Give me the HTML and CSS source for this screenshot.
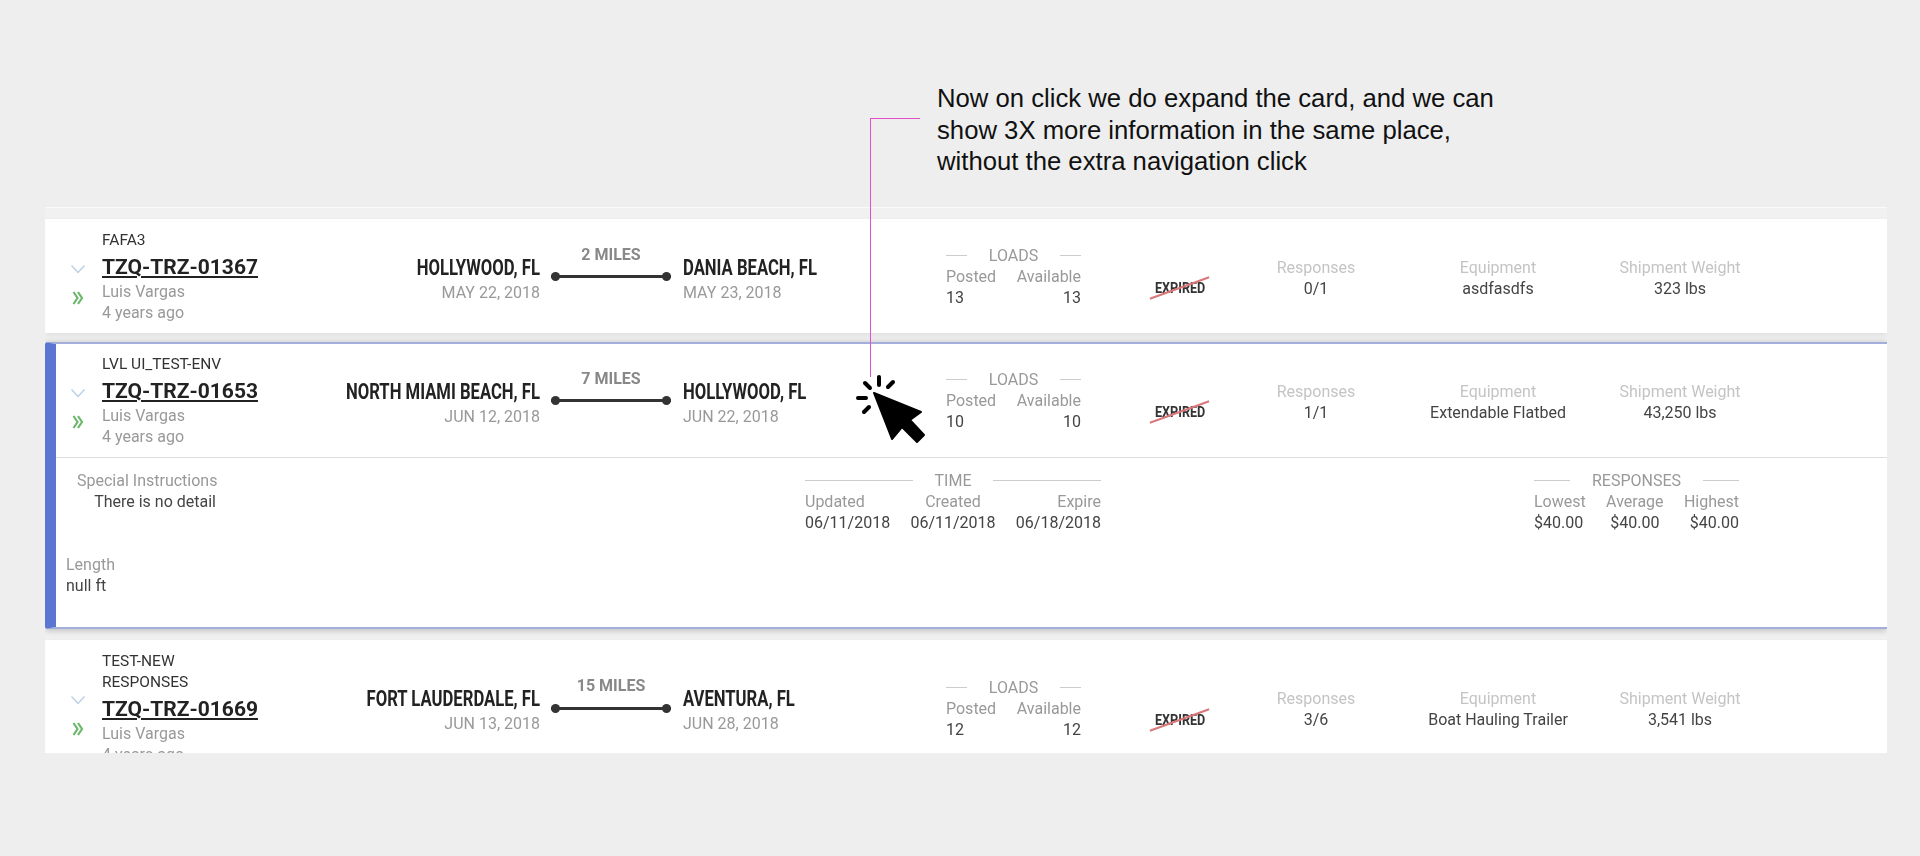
FILE: index.html
```html
<!DOCTYPE html>
<html lang="en">
<head>
    <meta charset="UTF-8">
    <meta name="viewport" content="width=device-width, initial-scale=1.0">
    <title>Shipments</title>
    <link rel="stylesheet" href="styles.css">
</head>
<body>
    <p class="note">Now on click we do expand the card, and we can<br>show 3X more information in the same place,<br>without the extra navigation click</p>

    <div class="leader"></div>

    <svg class="pointer" viewBox="0 0 120 100" width="120" height="100">
        <polygon points="34,33 81,52 70,60 84,75 77,82 62,67 52,79" fill="#000" stroke="#000" stroke-width="2" stroke-linejoin="round"/>
        <g stroke="#000" stroke-width="4" stroke-linecap="round">
            <line x1="39" y1="17" x2="39" y2="25"/>
            <line x1="25" y1="23" x2="30" y2="28"/>
            <line x1="53" y1="22" x2="48" y2="27"/>
            <line x1="18" y1="38" x2="26" y2="38"/>
            <line x1="24" y1="52" x2="29" y2="47"/>
        </g>
    </svg>

    <div class="list">
        <div class="card">
            <div class="row">
                <div class="toggles">
                    <svg class="chevron" viewBox="0 0 16 10" width="16" height="10"><path d="M1.5 1.5 8 8.5l6.500-7" fill="none" stroke="#bcd0e6" stroke-width="1.500"/></svg>
                    <svg class="arrows" viewBox="0 0 12 14" width="12" height="14"><path d="M1.500 1 5.500 7l-4 6M6 1l4 6-4 6" fill="none" stroke="#6cb86c" stroke-width="2.200"/></svg>
                </div>
                <div class="ident">
                    <div class="ref">FAFA3</div>
                    <a class="code">TZQ-TRZ-01367</a>
                    <div class="muted">Luis Vargas</div>
                    <div class="muted">4 years ago</div>
                </div>
                <div class="place origin">
                    <div class="city">HOLLYWOOD, FL</div>
                    <div class="date">MAY 22, 2018</div>
                </div>
                <div class="route">
                    <div class="miles">2 MILES</div>
                    <div class="track"></div>
                </div>
                <div class="place dest">
                    <div class="city">DANIA BEACH, FL</div>
                    <div class="date">MAY 23, 2018</div>
                </div>
                <div class="loads">
                    <div class="heading">LOADS</div>
                    <div class="pair"><span class="label">Posted</span><span class="label">Available</span></div>
                    <div class="pair"><span>13</span><span>13</span></div>
                </div>
                <div class="status"><span class="expired">EXPIRED</span></div>
                <div class="stat"><div class="faint">Responses</div><div>0/1</div></div>
                <div class="stat"><div class="faint">Equipment</div><div>asdfasdfs</div></div>
                <div class="stat"><div class="faint">Shipment Weight</div><div>323 lbs</div></div>
            </div>
        </div>

        <div class="card open">
            <div class="row">
                <div class="toggles">
                    <svg class="chevron" viewBox="0 0 16 10" width="16" height="10"><path d="M1.5 1.5 8 8.5l6.500-7" fill="none" stroke="#bcd0e6" stroke-width="1.500"/></svg>
                    <svg class="arrows" viewBox="0 0 12 14" width="12" height="14"><path d="M1.500 1 5.500 7l-4 6M6 1l4 6-4 6" fill="none" stroke="#6cb86c" stroke-width="2.200"/></svg>
                </div>
                <div class="ident">
                    <div class="ref">LVL UI_TEST-ENV</div>
                    <a class="code">TZQ-TRZ-01653</a>
                    <div class="muted">Luis Vargas</div>
                    <div class="muted">4 years ago</div>
                </div>
                <div class="place origin">
                    <div class="city">NORTH MIAMI BEACH, FL</div>
                    <div class="date">JUN 12, 2018</div>
                </div>
                <div class="route">
                    <div class="miles">7 MILES</div>
                    <div class="track"></div>
                </div>
                <div class="place dest">
                    <div class="city">HOLLYWOOD, FL</div>
                    <div class="date">JUN 22, 2018</div>
                </div>
                <div class="loads">
                    <div class="heading">LOADS</div>
                    <div class="pair"><span class="label">Posted</span><span class="label">Available</span></div>
                    <div class="pair"><span>10</span><span>10</span></div>
                </div>
                <div class="status"><span class="expired">EXPIRED</span></div>
                <div class="stat"><div class="faint">Responses</div><div>1/1</div></div>
                <div class="stat"><div class="faint">Equipment</div><div>Extendable Flatbed</div></div>
                <div class="stat"><div class="faint">Shipment Weight</div><div>43,250 lbs</div></div>
            </div>
            <div class="details">
                <div class="notes">
                    <div class="instructions">
                        <div class="label">Special Instructions</div>
                        <div>There is no detail</div>
                    </div>
                    <div class="length">
                        <div class="label">Length</div>
                        <div>null ft</div>
                    </div>
                </div>
                <div class="time">
                    <div class="heading">TIME</div>
                    <div class="triple">
                        <span class="label">Updated</span><span class="label">Created</span><span class="label">Expire</span>
                        <span>06/11/2018</span><span>06/11/2018</span><span>06/18/2018</span>
                    </div>
                </div>
                <div class="bids">
                    <div class="heading">RESPONSES</div>
                    <div class="triple">
                        <span class="label">Lowest</span><span class="label">Average</span><span class="label">Highest</span>
                        <span>$40.00</span><span>$40.00</span><span>$40.00</span>
                    </div>
                </div>
            </div>
        </div>

        <div class="card">
            <div class="row">
                <div class="toggles">
                    <svg class="chevron" viewBox="0 0 16 10" width="16" height="10"><path d="M1.5 1.5 8 8.5l6.500-7" fill="none" stroke="#bcd0e6" stroke-width="1.500"/></svg>
                    <svg class="arrows" viewBox="0 0 12 14" width="12" height="14"><path d="M1.500 1 5.500 7l-4 6M6 1l4 6-4 6" fill="none" stroke="#6cb86c" stroke-width="2.200"/></svg>
                </div>
                <div class="ident">
                    <div class="ref">TEST-NEW RESPONSES</div>
                    <a class="code">TZQ-TRZ-01669</a>
                    <div class="muted">Luis Vargas</div>
                    <div class="muted">4 years ago</div>
                </div>
                <div class="place origin">
                    <div class="city">FORT LAUDERDALE, FL</div>
                    <div class="date">JUN 13, 2018</div>
                </div>
                <div class="route">
                    <div class="miles">15 MILES</div>
                    <div class="track"></div>
                </div>
                <div class="place dest">
                    <div class="city">AVENTURA, FL</div>
                    <div class="date">JUN 28, 2018</div>
                </div>
                <div class="loads">
                    <div class="heading">LOADS</div>
                    <div class="pair"><span class="label">Posted</span><span class="label">Available</span></div>
                    <div class="pair"><span>12</span><span>12</span></div>
                </div>
                <div class="status"><span class="expired">EXPIRED</span></div>
                <div class="stat"><div class="faint">Responses</div><div>3/6</div></div>
                <div class="stat"><div class="faint">Equipment</div><div>Boat Hauling Trailer</div></div>
                <div class="stat"><div class="faint">Shipment Weight</div><div>3,541 lbs</div></div>
            </div>
        </div>
    </div>
</body>
</html>
```

FILE: styles.css
```css
body {
    margin: 0;
    height: 856px;
    overflow: hidden;
    position: relative;
    background-color: #eeeeee;
    font-family: Roboto, sans-serif;
    font-size: 16px;
    line-height: 21px;
    color: #444;
}

.note {
    margin: 0 0 0 937px;
    padding-top: 83px;
    height: 124px;
    font-family: "Liberation Sans", Arial, sans-serif;
    font-size: 25.700px;
    line-height: 31.500px;
    color: #111;
}

.leader {
    position: absolute;
    left: 870px;
    top: 118px;
    width: 49px;
    height: 258px;
    border-left: 1px solid #e24fc8;
    border-top: 1px solid #e24fc8;
    z-index: 2;
}

.pointer {
    position: absolute;
    left: 840px;
    top: 360px;
    z-index: 2;
}

.list {
    height: 545px;
    margin: 0 33px 0 45px;
    overflow: hidden;
    border-top: 1px solid #fafafa;
    background-color: #f1f1f1;
    filter: blur(0.7px);
}

.card {
    background-color: white;
    margin-top: 11px;
    box-shadow: 0 2px 5px rgba(0,0,0,0.08);
}

.card.open {
    position: relative;
    margin: 9px 0 6px;
    border-top: 2px solid #a3aedb;
    border-bottom: 2px solid #a3aedb;
    border-left: 11px solid #5a75d2;
    border-radius: 3px 0 0 3px;
    box-shadow: 0 1px 7px rgba(0,0,0,0.25);
}

.row {
    display: flex;
    align-items: center;
    padding: 11px 0 10px;
}

.open .row {
    padding-top: 10px;
    border-bottom: 1px solid #ddd;
}

.toggles {
    width: 57px;
    flex: none;
    display: flex;
    flex-direction: column;
    align-items: center;
    padding: 15px 0 0 9px;
    box-sizing: border-box;
    gap: 17px;
}

.open .toggles {
    width: 46px;
    padding: 15px 2px 0 0;
}

.chevron, .arrows {
    display: block;
}

.ident {
    width: 150px;
    flex: none;
}

.ref {
    font-size: 15.500px;
    color: #333;
    width: 120px;
}

.code {
    display: block;
    white-space: nowrap;
    margin: 3px 0 1px;
    font-size: 21px;
    line-height: 26px;
    font-weight: 700;
    color: #222;
    text-decoration: underline;
}

.muted {
    color: #999;
}

.place {
    flex: none;
    white-space: nowrap;
    padding-top: 2px;
}

.origin {
    width: 288px;
    text-align: right;
}

.dest {
    width: 263px;
}

/* no condensed face installed, so the city names get squeezed */
.city {
    font-size: 22.500px;
    line-height: 29px;
    font-weight: 700;
    color: #222;
    transform: scaleX(0.74);
}

.origin .city {
    transform-origin: right center;
}

.dest .city {
    transform-origin: left center;
}

.date {
    color: #999;
}

.route {
    flex: none;
    width: 120px;
    margin: 0 12px 0 11px;
    padding-bottom: 28px;
    text-align: center;
}

.miles {
    margin-bottom: 8px;
    line-height: 20px;
    font-weight: 700;
    color: #888;
}

.track {
    height: 8px;
    display: flex;
    align-items: center;
    justify-content: space-between;
    background: linear-gradient(#333, #333) center / 100% 3px no-repeat;
}

.track::before, .track::after {
    content: "";
    width: 9px;
    height: 9px;
    border-radius: 50%;
    background-color: #333;
}

.loads {
    flex: none;
    width: 135px;
}

.heading {
    display: flex;
    align-items: center;
    gap: 22px;
    color: #999;
}

.heading::before, .heading::after {
    content: "";
    flex: 1;
    height: 1px;
    background-color: #ccc;
}

.pair {
    display: flex;
    justify-content: space-between;
}

.triple {
    display: grid;
    grid-template-columns: auto auto auto;
    justify-content: space-between;
}

.triple span:nth-child(3n+2) {
    text-align: center;
}

.triple span:nth-child(3n) {
    text-align: right;
}

.label {
    color: #999;
}

.status {
    flex: none;
    position: relative;
    width: 144px;
    padding: 24px 0 0 74px;
    box-sizing: border-box;
}

.expired {
    display: block;
    font-size: 15px;
    font-weight: 700;
    white-space: nowrap;
    color: #333;
    transform: scaleX(0.84);
    transform-origin: left center;
}

/* the strike line over the word */
.status::after {
    content: "";
    position: absolute;
    left: 67px;
    top: 33px;
    width: 63px;
    height: 2px;
    background-color: #d9777a;
    transform: rotate(-20deg);
}

.stat {
    flex: none;
    width: 182px;
    text-align: center;
    white-space: nowrap;
    margin-top: 2px;
}

.faint {
    color: #c4c4c4;
}

.details {
    display: flex;
    height: 169px;
    padding-top: 12px;
    box-sizing: border-box;
}

.notes {
    width: 749px;
    flex: none;
}

.instructions {
    width: 139px;
    margin-left: 21px;
    text-align: right;
    white-space: nowrap;
}

.instructions .label {
    text-align: left;
}

.length {
    margin: 42px 0 0 10px;
}

.time {
    flex: none;
    width: 296px;
}

.bids {
    flex: none;
    width: 205px;
    margin-left: 433px;
}
```
